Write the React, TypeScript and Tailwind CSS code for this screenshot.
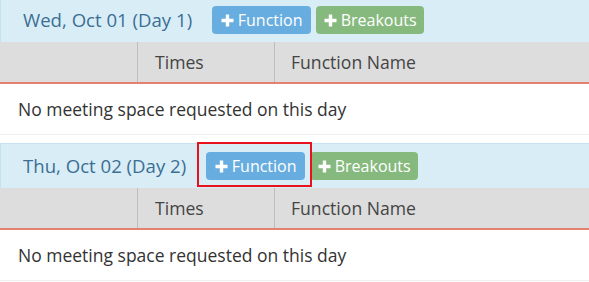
import React from "react";

const days = [
  { label: "Wed, Oct 01 (Day 1)", highlight: false },
  { label: "Thu, Oct 02 (Day 2)", highlight: true },
];

function Plus() {
  return (
    <svg width="13" height="13" viewBox="0 0 13 13" className="shrink-0">
      <path d="M6.5 0.5v12M0.5 6.5h12" stroke="white" strokeWidth="3.4" />
    </svg>
  );
}

function DayBlock({ label, highlight, first }: { label: string; highlight: boolean; first: boolean }) {
  return (
    <div className={first ? "-mt-[3px] mb-[8px]" : ""}>
      {/* day header */}
      <div className="h-[45px] flex items-center pl-[22px] bg-[#d9edf7] border-t border-l border-[#c4e3f0]">
        <span className="text-[18.6px] text-[#3b6f94] mr-[20px]">{label}</span>
        <div className="flex items-center gap-[5px]">
          <div className="relative">
            <button className="h-[28px] w-[99px] rounded-[4px] bg-[#68ade0] text-white text-[16px] flex items-center justify-center gap-[4px]">
              <Plus />
              Function
            </button>
            {highlight && (
              <span className="absolute -left-[9px] -right-[7px] -top-[10px] -bottom-[7px] border-2 border-[#e8121c] pointer-events-none" />
            )}
          </div>
          <button className="h-[28px] w-[108px] rounded-[4px] bg-[#86b97e] text-white text-[16px] flex items-center justify-center gap-[4px]">
            <Plus />
            Breakouts
          </button>
        </div>
      </div>

      {/* table head */}
      <div className="grid grid-cols-[137px_137px_1fr] h-[42px] bg-[#dddddd] border-b-2 border-[#e3806f] text-[17.6px] text-[#444]">
        <div />
        <div className="border-l border-[#bdbdbd] flex items-center pl-[17px]">Times</div>
        <div className="border-l border-[#bdbdbd] flex items-center pl-[16px]">Function Name</div>
      </div>

      {/* empty row */}
      <div className="h-[51px] flex items-center pl-[18px] bg-white border-b border-[#eeeeee] text-[17.5px] text-[#333]">
        No meeting space requested on this day
      </div>
    </div>
  );
}

export default function App() {
  return (
    <div className="w-[589px] h-[282px] overflow-hidden bg-white font-['Open_Sans',sans-serif]">
      {days.map((d, i) => (
        <DayBlock key={d.label} label={d.label} highlight={d.highlight} first={i === 0} />
      ))}
    </div>
  );
}
